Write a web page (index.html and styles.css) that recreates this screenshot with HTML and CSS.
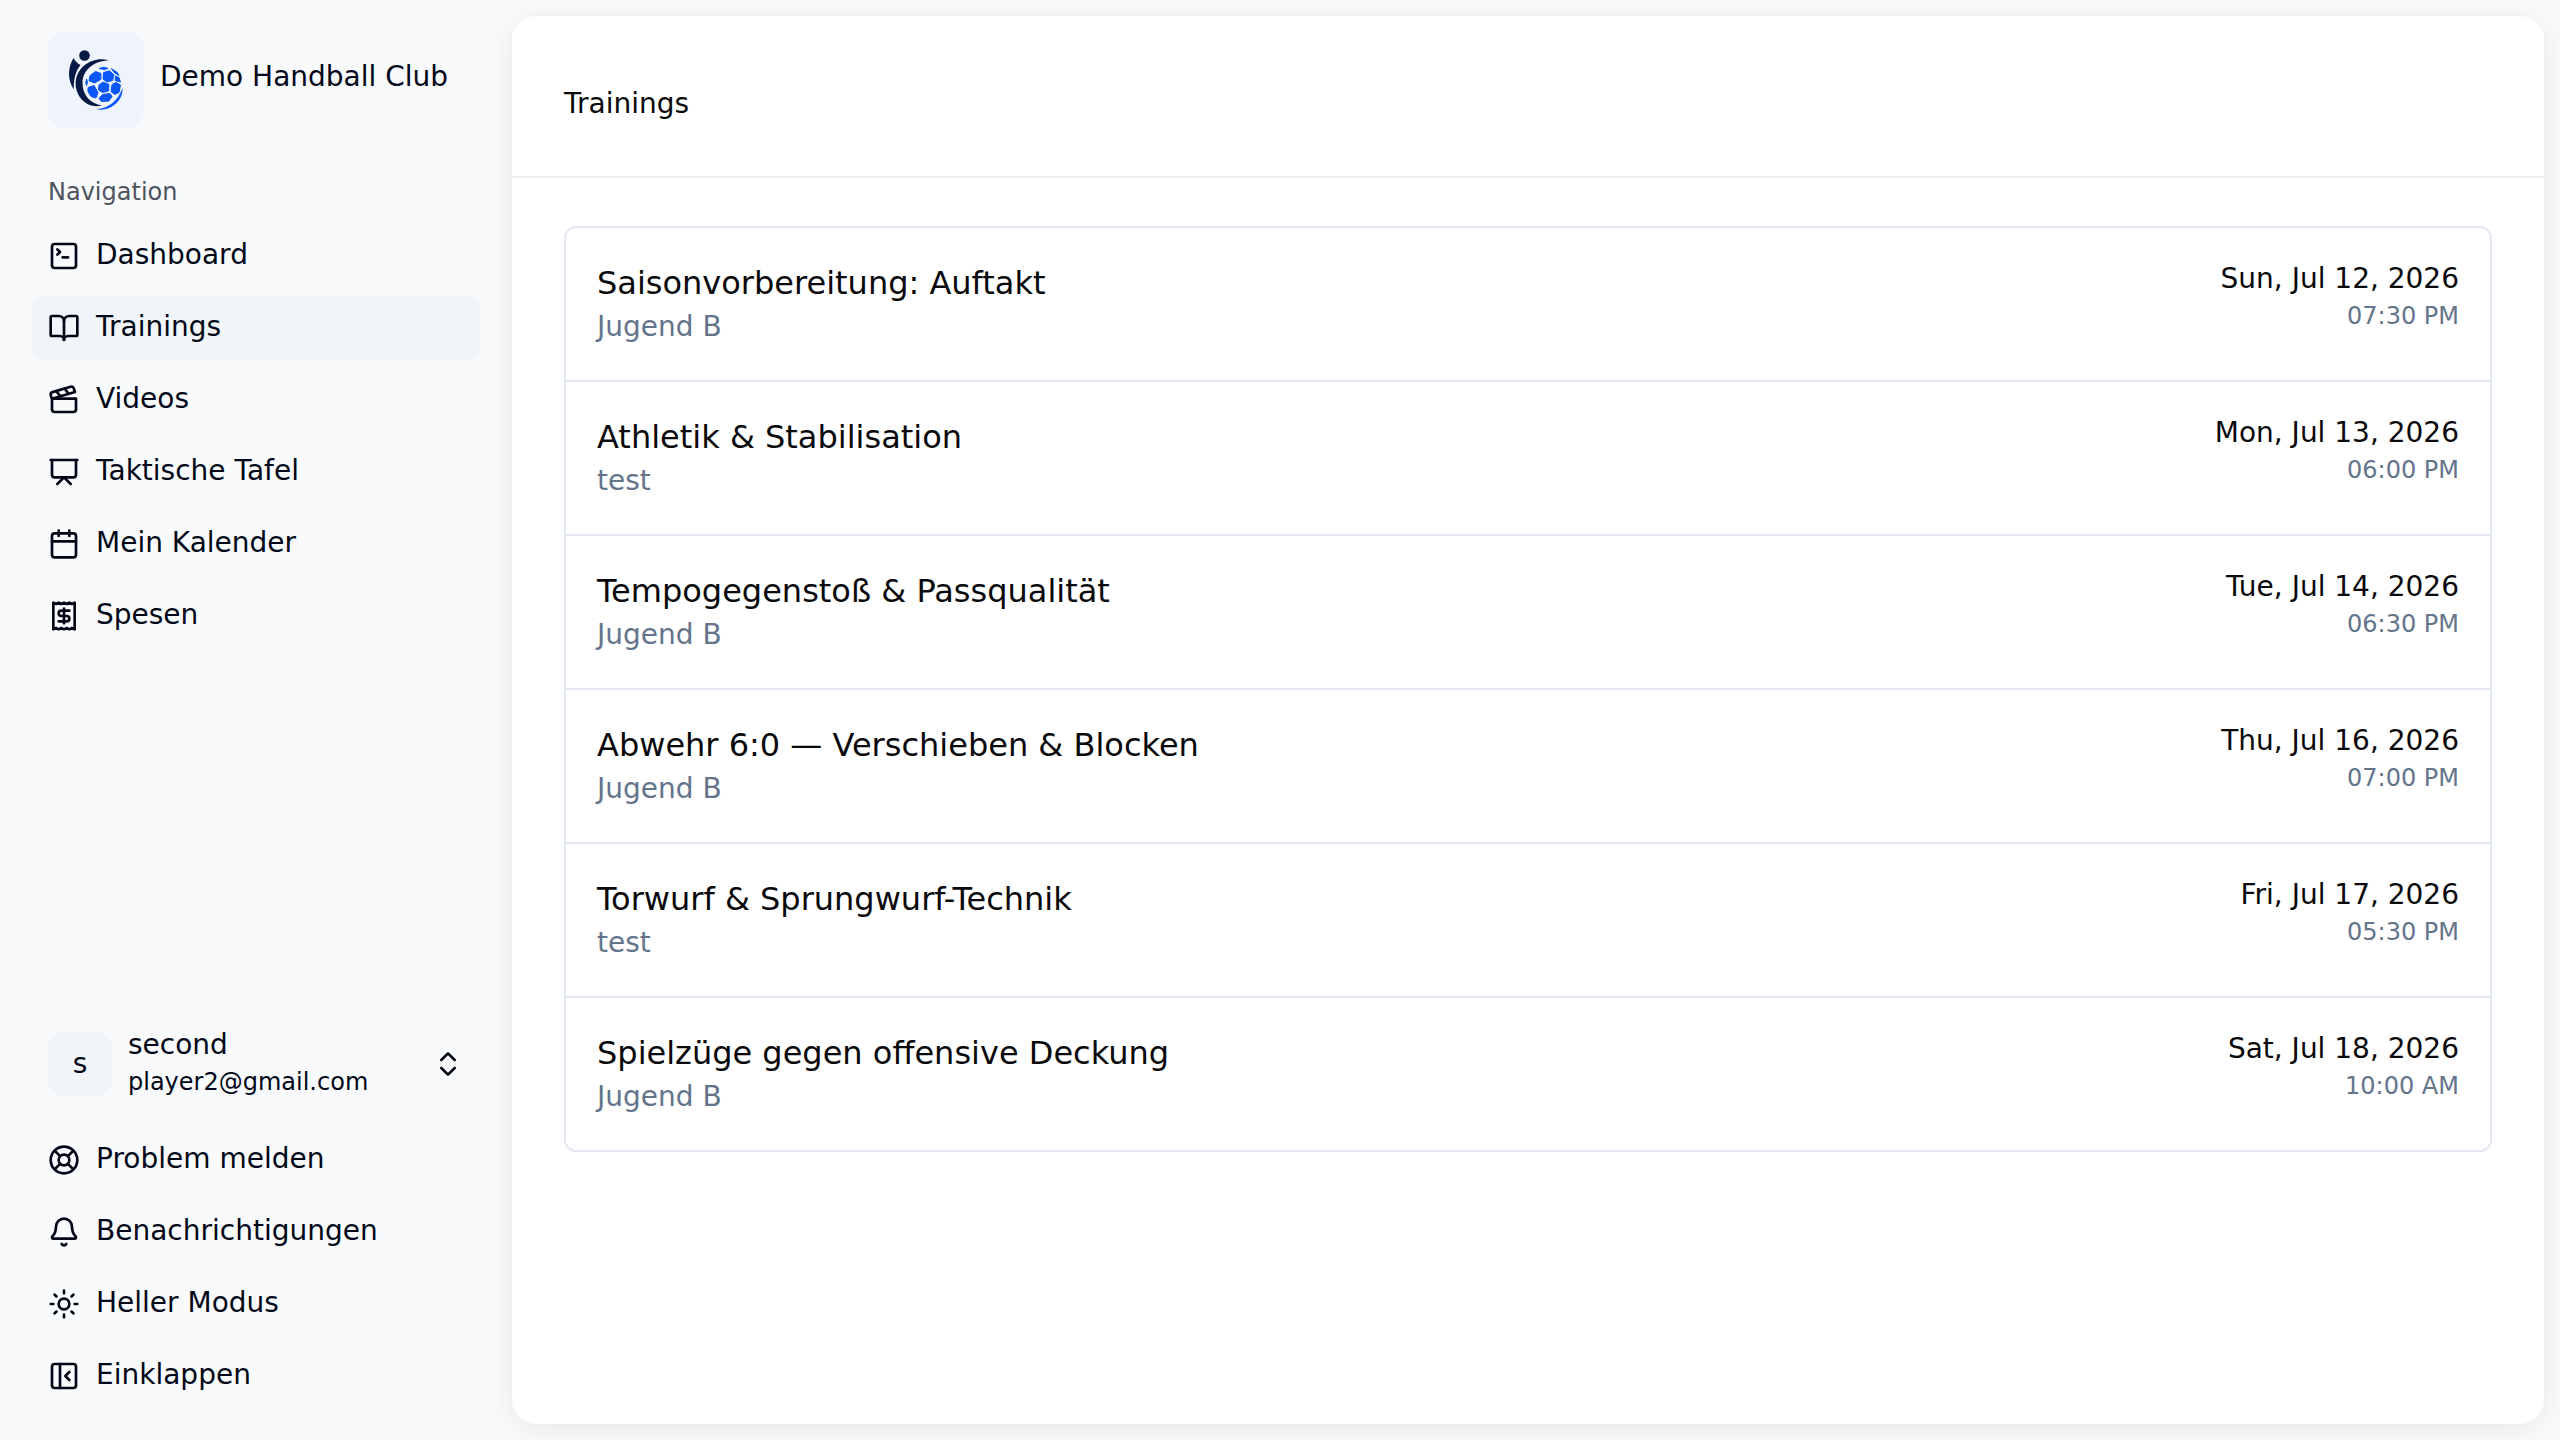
FILE: index.html
```html
<!DOCTYPE html>
<html lang="de">
<head>
<meta charset="utf-8">
<meta name="viewport" content="width=device-width, initial-scale=1">
<title>Trainings</title>
<link rel="stylesheet" href="styles.css">
</head>
<body>
<div class="app">
  <aside class="sidebar">
    <a class="brand" href="#">
      <span class="brand-logo">
        <svg viewBox="0 0 96 96" aria-hidden="true">
          <circle cx="36.500" cy="23.500" r="5.300" fill="#071a45"/>
          <path fill="#071a45" d="M25.500 26C27 29 29.500 31.500 32.500 33C28 38.500 25.500 46 25.800 57.500C19.500 48 19.500 36 25.500 26Z"/>
          <path fill="#071a45" d="M61 28.500C47 24 28 33 27.600 52C28 66 40 77 54 73.500C42 71.500 34.500 63 34.500 51C34.500 38 46 28.500 61 28.500Z"/>
          <path fill="#0b57f5" d="M74.500 56C75.500 69 62 80 48.500 77.200C60 76.500 70 69 74.500 56Z"/>
          <g fill="#0b57f5" stroke="#0b57f5" stroke-width="1" stroke-linejoin="round">
            <path d="M51 36.500L56 35.200L60 36.400L56.500 37.600Z"/>
            <path d="M63.500 36.700L69 40.200L71 43.500L66.500 41Z"/>
            <path d="M42 43.500L47.500 39.500L53 41.500L52.800 47.500L46.500 51L41 48.800Z"/>
            <path d="M55.500 40.500L61.500 38.800L66 43L64.500 48.500L59 50L55 47Z"/>
            <path d="M67.500 44L71 45.500L72.500 50L67 48.500Z"/>
            <path d="M51 53L55 50L61 52.500L60.500 59L54.500 60.500L50.500 58Z"/>
            <path d="M64 52.500L68 50.500L72.500 53L71 60.500L66.500 62.500L63 59.500Z"/>
            <path d="M40 55.500L46 53.500L50 60.500L48 66L43 64.500L40 59.500Z"/>
            <path d="M51 66.500L54.500 62.500L62 61.500L64 64.500L61 69L53.500 69.500Z"/>
            <path d="M38.500 47L39.500 50L38.600 53.500L37.800 51Z"/>
          </g>
        </svg>
      </span>
      <span class="brand-name">Demo Handball Club</span>
    </a>

    <nav class="nav" aria-labelledby="nav-title">
      <h2 class="nav-title" id="nav-title">Navigation</h2>
      <ul class="menu">
        <li><a class="item" href="#"><svg class="icon" viewBox="0 0 24 24"><path d="m7 11 2-2-2-2"/><path d="M11 13h4"/><rect width="18" height="18" x="3" y="3" rx="2"/></svg><span class="item-label">Dashboard</span></a></li>
        <li><a class="item item-active" href="#" aria-current="page"><svg class="icon" viewBox="0 0 24 24"><path d="M12 7v14"/><path d="M3 18a1 1 0 0 1-1-1V4a1 1 0 0 1 1-1h5a4 4 0 0 1 4 4 4 4 0 0 1 4-4h5a1 1 0 0 1 1 1v13a1 1 0 0 1-1 1h-6a3 3 0 0 0-3 3 3 3 0 0 0-3-3z"/></svg><span class="item-label">Trainings</span></a></li>
        <li><a class="item" href="#"><svg class="icon" viewBox="0 0 24 24"><path d="M20.200 6 3 11l-.9-2.400c-.3-1.100.3-2.200 1.300-2.500l13.500-4c1.100-.3 2.200.3 2.500 1.300Z"/><path d="m6.200 5.300 3.100 3.900"/><path d="m12.400 3.400 3.100 4"/><path d="M3 11h18v8a2 2 0 0 1-2 2H5a2 2 0 0 1-2-2Z"/></svg><span class="item-label">Videos</span></a></li>
        <li><a class="item" href="#"><svg class="icon" viewBox="0 0 24 24"><path d="M2 3h20"/><path d="M21 3v11a2 2 0 0 1-2 2H5a2 2 0 0 1-2-2V3"/><path d="m7 21 5-5 5 5"/></svg><span class="item-label">Taktische Tafel</span></a></li>
        <li><a class="item" href="#"><svg class="icon" viewBox="0 0 24 24"><path d="M8 2v4"/><path d="M16 2v4"/><rect width="18" height="18" x="3" y="4" rx="2"/><path d="M3 10h18"/></svg><span class="item-label">Mein Kalender</span></a></li>
        <li><a class="item" href="#"><svg class="icon" viewBox="0 0 24 24"><path d="M4 2v20l2-1 2 1 2-1 2 1 2-1 2 1 2-1 2 1V2l-2 1-2-1-2 1-2-1-2 1-2-1-2 1Z"/><path d="M16 8h-6a2 2 0 1 0 0 4h4a2 2 0 1 1 0 4H8"/><path d="M12 17.500v-11"/></svg><span class="item-label">Spesen</span></a></li>
      </ul>
    </nav>

    <div class="footer">
      <button class="user" type="button">
        <span class="avatar">s</span>
        <span class="user-text"><span class="user-name">second</span><span class="user-mail">player2@gmail.com</span></span>
        <svg class="icon" viewBox="0 0 24 24"><path d="m7 15 5 5 5-5"/><path d="m7 9 5-5 5 5"/></svg>
      </button>
      <ul class="menu">
        <li><button class="item" type="button"><svg class="icon" viewBox="0 0 24 24"><circle cx="12" cy="12" r="10"/><path d="m4.930 4.930 4.240 4.240"/><path d="m14.830 9.170 4.240-4.240"/><path d="m14.830 14.830 4.240 4.240"/><path d="m9.170 14.830-4.240 4.240"/><circle cx="12" cy="12" r="4"/></svg><span class="item-label">Problem melden</span></button></li>
        <li><button class="item" type="button"><svg class="icon" viewBox="0 0 24 24"><path d="M10.268 21a2 2 0 0 0 3.464 0"/><path d="M3.262 15.326A1 1 0 0 0 4 17h16a1 1 0 0 0 .740-1.673C19.410 13.956 18 12.499 18 8A6 6 0 0 0 6 8c0 4.499-1.411 5.956-2.738 7.326"/></svg><span class="item-label">Benachrichtigungen</span></button></li>
        <li><button class="item" type="button"><svg class="icon" viewBox="0 0 24 24"><circle cx="12" cy="12" r="4"/><path d="M12 2v2"/><path d="M12 20v2"/><path d="m4.930 4.930 1.410 1.410"/><path d="m17.660 17.660 1.410 1.410"/><path d="M2 12h2"/><path d="M20 12h2"/><path d="m6.340 17.660-1.410 1.410"/><path d="m19.070 4.930-1.410 1.410"/></svg><span class="item-label">Heller Modus</span></button></li>
        <li><button class="item" type="button"><svg class="icon" viewBox="0 0 24 24"><rect width="18" height="18" x="3" y="3" rx="2"/><path d="M9 3v18"/><path d="m16 15-3-3 3-3"/></svg><span class="item-label">Einklappen</span></button></li>
      </ul>
    </div>
  </aside>

  <main class="panel">
    <header class="panel-header"><h1 class="panel-title">Trainings</h1></header>
    <ul class="list">
      <li class="row"><div><h3 class="row-title">Saisonvorbereitung: Auftakt</h3><p class="row-team">Jugend B</p></div><div class="row-when"><p class="row-date">Sun, Jul 12, 2026</p><p class="row-time">07:30 PM</p></div></li>
      <li class="row"><div><h3 class="row-title">Athletik &amp; Stabilisation</h3><p class="row-team">test</p></div><div class="row-when"><p class="row-date">Mon, Jul 13, 2026</p><p class="row-time">06:00 PM</p></div></li>
      <li class="row"><div><h3 class="row-title">Tempogegenstoß &amp; Passqualität</h3><p class="row-team">Jugend B</p></div><div class="row-when"><p class="row-date">Tue, Jul 14, 2026</p><p class="row-time">06:30 PM</p></div></li>
      <li class="row"><div><h3 class="row-title">Abwehr 6:0 — Verschieben &amp; Blocken</h3><p class="row-team">Jugend B</p></div><div class="row-when"><p class="row-date">Thu, Jul 16, 2026</p><p class="row-time">07:00 PM</p></div></li>
      <li class="row"><div><h3 class="row-title">Torwurf &amp; Sprungwurf-Technik</h3><p class="row-team">test</p></div><div class="row-when"><p class="row-date">Fri, Jul 17, 2026</p><p class="row-time">05:30 PM</p></div></li>
      <li class="row"><div><h3 class="row-title">Spielzüge gegen offensive Deckung</h3><p class="row-team">Jugend B</p></div><div class="row-when"><p class="row-date">Sat, Jul 18, 2026</p><p class="row-time">10:00 AM</p></div></li>
    </ul>
  </main>
</div>
</body>
</html>
```
FILE: styles.css
```css
*, *::before, *::after { box-sizing: border-box; }

body, h1, h2, h3, p, ul { margin: 0; padding: 0; }
h1, h2, h3 { font-weight: 400; }
ul { list-style: none; }

body {
  background: #f9fafc;
  color: #020817;
  font-family: "DejaVu Sans", sans-serif;
  font-size: 28px;
  line-height: 40px;
}

a { color: inherit; text-decoration: none; }

button {
  border: 0;
  background: none;
  color: inherit;
  font: inherit;
  text-align: left;
  cursor: pointer;
}

.app { display: flex; min-height: 100vh; }

/* Sidebar */
.sidebar {
  display: flex;
  flex-direction: column;
  flex: none;
  width: 512px;
  padding: 32px;
}

.brand {
  display: flex;
  align-items: center;
  gap: 16px;
  padding: 0 16px;
}

.brand-logo {
  width: 96px;
  height: 96px;
  border-radius: 16px;
  background: #eef3fc;
}
.brand-logo svg { display: block; width: 100%; height: 100%; }
.brand-name { padding-bottom: 6px; }

.nav { flex: 1; padding-top: 32px; }

.nav-title {
  padding: 16px;
  color: #4e535d;
  font-size: 24px;
  line-height: 32px;
}

.menu { display: flex; flex-direction: column; gap: 8px; }

.item {
  display: flex;
  align-items: center;
  gap: 16px;
  width: 100%;
  height: 64px;
  padding: 0 16px;
  border-radius: 12px;
}
.item-active { background: #f1f5f9; }
.item-label { padding-bottom: 2px; }

.icon {
  flex: none;
  width: 32px;
  height: 32px;
  fill: none;
  stroke: currentColor;
  stroke-width: 2;
  stroke-linecap: round;
  stroke-linejoin: round;
}

.footer { display: flex; flex-direction: column; gap: 16px; }

.user {
  display: flex;
  align-items: center;
  gap: 16px;
  height: 96px;
  padding: 0 16px;
}

.avatar {
  display: flex;
  align-items: center;
  justify-content: center;
  width: 64px;
  height: 64px;
  border-radius: 16px;
  background: #f1f5f9;
}

.user-text { display: flex; flex: 1; flex-direction: column; padding-bottom: 4px; }
.user-mail { font-size: 24px; line-height: 34px; }

/* Content panel */
.panel {
  flex: 1;
  margin: 16px 16px 16px 0;
  padding-top: 16px;
  border-radius: 24px;
  background: #fff;
  box-shadow: 0 4px 30px rgba(0, 0, 0, 0.08);
  color: #09090b;
}

.panel-header {
  padding: 52px;
  border-bottom: 2px solid #e9eef4;
  background: #fff;
}
.panel-title { font-size: 28px; line-height: 40px; }

.list {
  margin: 48px 52px;
  border: 2px solid #e2e8f0;
  border-radius: 12px;
}

.row {
  display: flex;
  justify-content: space-between;
  padding: 31px 31px 33px;
}
.row + .row { border-top: 2px solid #e2e8f0; }

.row-title { font-size: 32px; line-height: 48px; }
.row-team { color: #64748b; }
.row-when { text-align: right; }
.row-time { color: #64748b; font-size: 24px; line-height: 34px; }
```
